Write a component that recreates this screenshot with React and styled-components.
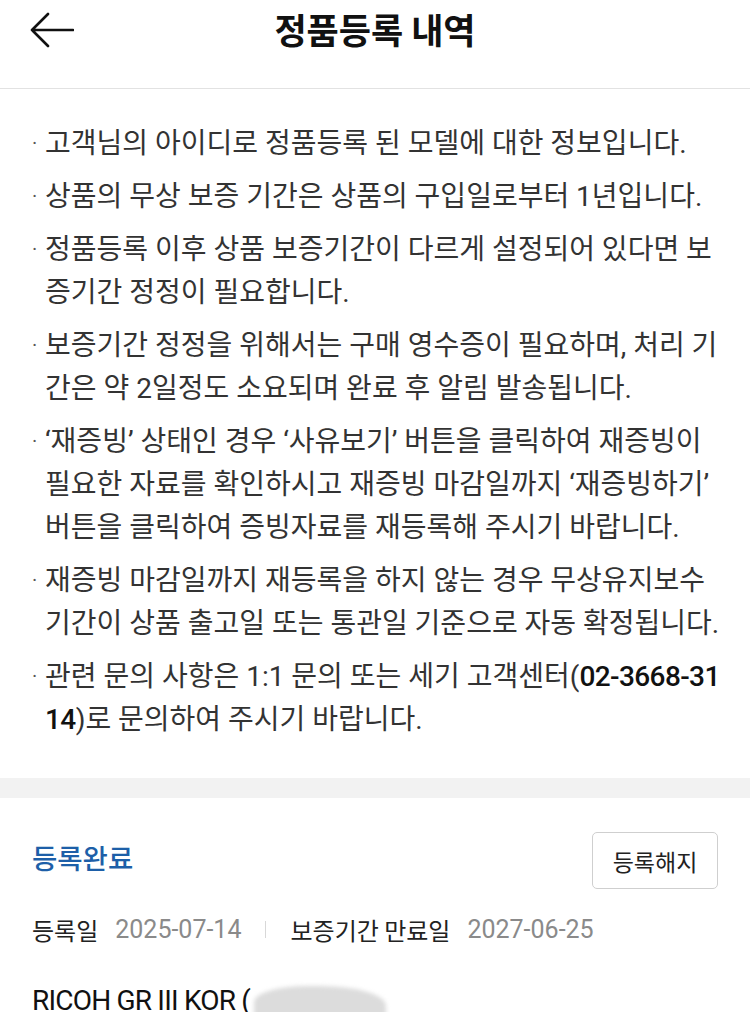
import React from "react";
import styled, { createGlobalStyle } from "styled-components";

const Global = createGlobalStyle`
  html, body { margin: 0; padding: 0; background: #fff; }
  body {
    font-family: Roboto, "Noto Sans CJK KR", "Noto Sans", sans-serif;
    color: #222;
    -webkit-font-smoothing: antialiased;
  }
  * { box-sizing: border-box; }
`;

const Page = styled.div`
  width: 750px;
  height: 1012px;
  overflow: hidden;
  background: #fff;
`;

const Header = styled.header`
  height: 89px;
  border-bottom: 1px solid #e2e2e2;
  display: flex;
  align-items: flex-start;
  justify-content: center;
  padding-top: 9px;
  position: relative;
`;

const BackButton = styled.button`
  position: absolute;
  left: 30px;
  top: 12px;
  width: 44px;
  height: 36px;
  border: none;
  background: transparent;
  padding: 0;
  display: flex;
`;

const Title = styled.h1`
  margin: 0;
  font-size: 35px;
  line-height: 40px;
  font-weight: 700;
  color: #111;
  font-family: "Noto Sans CJK KR", sans-serif;
`;

const Notes = styled.ul`
  list-style: none;
  margin: 0;
  padding: 33px 20px 37px 32px;
  display: flex;
  flex-direction: column;
  gap: 10px;
`;

const Note = styled.li`
  display: flex;
  font-size: 28px;
  line-height: 43px;
  color: #333;
  white-space: nowrap;
`;

const Dot = styled.span`
  width: 13px;
  flex: none;
  font-size: 20px;
  color: #555;
`;

const Phone = styled.span`
  font-family: Roboto, sans-serif;
  font-weight: 500;
  letter-spacing: -0.6px;
  color: #111;
`;

const Band = styled.div`
  height: 20px;
  background: #f2f2f2;
`;

const Section = styled.section`
  padding: 34px 32px 0 32px;
`;

const StatusRow = styled.div`
  display: flex;
  justify-content: space-between;
  align-items: center;
`;

const Status = styled.span`
  font-size: 27.5px;
  font-weight: 500;
  color: #1d5fa8;
  font-family: "Noto Sans CJK KR", sans-serif;
  margin-top: -8px;
`;

const OutlineButton = styled.button`
  width: 126px;
  height: 57px;
  border: 1.5px solid #cfcfcf;
  border-radius: 5px;
  background: #fff;
  font-family: "Noto Sans CJK KR", sans-serif;
  font-size: 23px;
  color: #222;
  padding: 0;
`;

const InfoRow = styled.div`
  display: flex;
  align-items: center;
  margin-top: 24px;
  height: 32px;
  white-space: nowrap;
`;

const Label = styled.span`
  font-size: 24px;
  color: #222;
  font-family: "Noto Sans CJK KR", sans-serif;
  margin-right: 17px;
`;

const Value = styled.span`
  font-size: 25px;
  color: #8a8a8a;
  font-family: Roboto, sans-serif;
`;

const Divider = styled.span`
  width: 1px;
  height: 17px;
  background: #d8d8d8;
  margin: 0 24px;
`;

const Model = styled.div`
  margin-top: 31px;
  font-size: 28px;
  line-height: 34px;
  color: #111;
  font-family: Roboto, sans-serif;
  letter-spacing: -0.8px;
  display: flex;
  align-items: center;
  white-space: nowrap;
`;

const Blur = styled.span`
  display: inline-block;
  width: 132px;
  height: 40px;
  margin-left: 4px;
  margin-top: 10px;
  background: #dcdcdc;
  border-radius: 40% 50% 0 0;
  filter: blur(2px);
`;

const notes = [
  ["고객님의 아이디로 정품등록 된 모델에 대한 정보입니다."],
  ["상품의 무상 보증 기간은 상품의 구입일로부터 1년입니다."],
  ["정품등록 이후 상품 보증기간이 다르게 설정되어 있다면 보", "증기간 정정이 필요합니다."],
  ["보증기간 정정을 위해서는 구매 영수증이 필요하며, 처리 기", "간은 약 2일정도 소요되며 완료 후 알림 발송됩니다."],
  [
    "‘재증빙’ 상태인 경우 ‘사유보기’ 버튼을 클릭하여 재증빙이",
    "필요한 자료를 확인하시고 재증빙 마감일까지 ‘재증빙하기’",
    "버튼을 클릭하여 증빙자료를 재등록해 주시기 바랍니다.",
  ],
  ["재증빙 마감일까지 재등록을 하지 않는 경우 무상유지보수", "기간이 상품 출고일 또는 통관일 기준으로 자동 확정됩니다."],
];

function Lines({ lines }) {
  return (
    <span>
      {lines.map((l, i) => (
        <React.Fragment key={i}>
          {i > 0 && <br />}
          {l}
        </React.Fragment>
      ))}
    </span>
  );
}

export default function App() {
  return (
    <Page>
      <Global />
      <Header>
        <BackButton aria-label="뒤로">
          <svg width="44" height="36" viewBox="0 0 44 36" fill="none">
            <path d="M43 18H2M18 2L2 18L18 34" stroke="#111" strokeWidth="2.6" strokeLinecap="round" strokeLinejoin="round" />
          </svg>
        </BackButton>
        <Title>정품등록 내역</Title>
      </Header>
      <Notes>
        {notes.map((n, i) => (
          <Note key={i}>
            <Dot>·</Dot>
            <Lines lines={n} />
          </Note>
        ))}
        <Note>
          <Dot>·</Dot>
          <span>
            관련 문의 사항은 1:1 문의 또는 세기 고객센터(<Phone>02-3668-31</Phone>
            <br />
            <Phone>14</Phone>)로 문의하여 주시기 바랍니다.
          </span>
        </Note>
      </Notes>
      <Band />
      <Section>
        <StatusRow>
          <Status>등록완료</Status>
          <OutlineButton>등록해지</OutlineButton>
        </StatusRow>
        <InfoRow>
          <Label>등록일</Label>
          <Value>2025-07-14</Value>
          <Divider />
          <Label>보증기간 만료일</Label>
          <Value>2027-06-25</Value>
        </InfoRow>
        <Model>
          RICOH GR III KOR (<Blur />
        </Model>
      </Section>
    </Page>
  );
}
